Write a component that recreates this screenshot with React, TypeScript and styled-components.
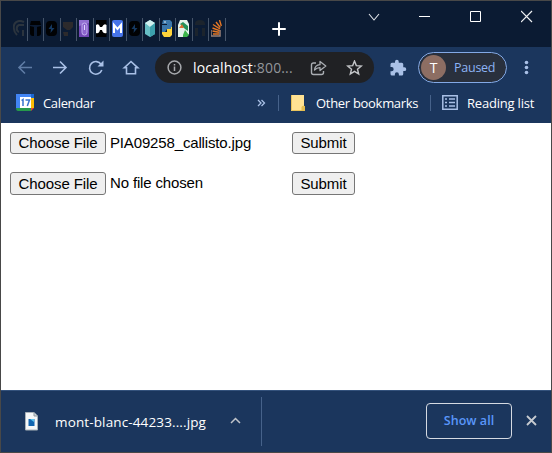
import React from "react";
import styled, { createGlobalStyle } from "styled-components";

const GlobalStyle = createGlobalStyle`
  * { box-sizing: border-box; }
  body { margin: 0; background: #fff; overflow: hidden; }
  svg { display: block; flex: none; }
`;

const Window = styled.div`
  width: 552px;
  height: 453px;
  display: flex;
  flex-direction: column;
  border: 1px solid #484848;
  background: #1b365d;
  font-family: "Open Sans", "Noto Sans", sans-serif;
  color: #fff;
`;

const TitleBar = styled.header`
  display: flex;
  height: 46px;
  flex: none;
  background: #0b1b33;
`;

const Tabs = styled.div`
  display: flex;
  padding: 17px 0 0 10px;
  width: 271px;
`;

const Tab = styled.div`
  width: 16.5px;
  height: 23px;
  border-right: 1px solid #46556a;
  padding: 2px 0 0 2px;
`;

const NewTab = styled.div`
  width: 14px;
  padding-top: 21px;
`;

const Controls = styled.div`
  display: flex;
  gap: 39px;
  padding: 9px 0 0 82px;
`;

const Toolbar = styled.div`
  display: flex;
  align-items: center;
  height: 41px;
  flex: none;
  padding-left: 15px;
`;

const NavButtons = styled.nav`
  display: flex;
  gap: 17.4px;
  width: 139px;
`;

const AddressBar = styled.div`
  display: flex;
  align-items: center;
  width: 219px;
  height: 31px;
  border-radius: 16px;
  background: #202124;
  padding-left: 12px;
`;

const Label = styled.span<{ $size?: number; $spacing?: number; $width?: number; $color?: string }>`
  flex: none;
  width: ${(p) => (p.$width ? `${p.$width}px` : "auto")};
  font-size: ${(p) => p.$size ?? 13}px;
  letter-spacing: ${(p) => p.$spacing ?? 0}px;
  color: ${(p) => p.$color ?? "#fff"};
  line-height: 20px;
  white-space: nowrap;
`;

const Address = styled(Label)`
  padding-left: 11px;
`;

const Port = styled.span`
  color: #93969b;
`;

const StarSlot = styled.span`
  margin-left: 19px;
`;

const PuzzleSlot = styled.span`
  margin-left: 15px;
`;

const Profile = styled.div`
  display: flex;
  align-items: center;
  width: 89px;
  height: 31px;
  margin: 0 11px;
  border: 1px solid #83a9e6;
  border-radius: 16px;
  background: #29303d;
  padding-left: 2px;
`;

const Avatar = styled.span`
  display: grid;
  place-items: center;
  width: 25px;
  height: 25px;
  margin-right: 8px;
  border-radius: 50%;
  background: #8d6e63;
  font-size: 14px;
  line-height: 24px;
`;

const Bookmarks = styled.div`
  display: flex;
  align-items: center;
  height: 35px;
  flex: none;
  padding: 0 0 6px 15px;
`;

const Bookmark = styled.div<{ $width: number; $gap: number }>`
  display: flex;
  align-items: center;
  width: ${(p) => p.$width}px;
  gap: ${(p) => p.$gap}px;
`;

const Divider = styled.span<{ $height: number; $after: number }>`
  flex: none;
  width: 1px;
  height: ${(p) => p.$height}px;
  margin-right: ${(p) => p.$after}px;
  background: #46628a;
`;

const Page = styled.main`
  flex: 1;
  display: flex;
  flex-direction: column;
  gap: 18px;
  padding: 9px;
  background: #fff;
  color: #000;
  font-family: "Liberation Sans", Arial, sans-serif;
  font-size: 15px;
`;

const UploadRow = styled.form<{ $height: number }>`
  display: flex;
  align-items: stretch;
  height: ${(p) => p.$height}px;
`;

const FileName = styled.span`
  width: 186px;
  padding-left: 4px;
  line-height: 22px;
  letter-spacing: -0.15px;
`;

const PlainButton = styled.button<{ $width: number }>`
  width: ${(p) => p.$width}px;
  padding: 0;
  border: 1px solid #767676;
  border-radius: 3px;
  background: #efefef;
  color: #000;
  font: 15px/20px "Liberation Sans", Arial, sans-serif;
  letter-spacing: -0.1px;
  white-space: nowrap;
`;

const Downloads = styled.footer`
  display: flex;
  align-items: center;
  height: 62px;
  flex: none;
  border-top: 1px solid #34527c;
  padding-left: 23px;
`;

const DownloadItem = styled.div`
  display: flex;
  align-items: center;
  width: 237px;
`;

const ShowAll = styled.button`
  width: 86px;
  height: 36px;
  margin: 0 14px 2px 164px;
  padding: 0;
  border: 1px solid #d5dae2;
  border-radius: 4px;
  background: transparent;
  color: #5a96fa;
  font: 600 12.5px "Open Sans", "Noto Sans", sans-serif;
  letter-spacing: 0.05px;
`;

const CloseSlot = styled.span`
  margin-bottom: 3px;
`;

const Bolt = () => (
  <svg width="12" height="17" viewBox="0 0 12 17">
    <rect y="1" width="11" height="15" rx="4" fill="#010204" />
    <path d="M6 4 2.5 9H5l-.5 4L8.5 8H6z" fill="#153860" />
  </svg>
);

const tabIcons = [
  <svg width="12" height="17" viewBox="0 0 12 17" key="a"><path d="M11 2C5-1-.5 3 1 9c0 3 2 5 3 6M6 12c-3-1-3-6 0-7h5M10 10v6" fill="none" stroke="#2b343e" strokeWidth="2" /></svg>,
  <svg width="12" height="17" viewBox="0 0 12 17" key="b"><path d="M1 1h9l1 4H0z" fill="#010204" /><path d="M0 6l4 1v9H3q-3 0-3-3zM11 6 7 7v9h1q3 0 3-3z" fill="#010204" /></svg>,
  <Bolt key="c" />,
  <svg width="12" height="17" viewBox="0 0 12 17" key="d"><path d="M0 2h10v5L7 10H4l-4-3zM0 12h5v4H1z" fill="#2c2a2c" /></svg>,
  <svg width="12" height="17" viewBox="0 0 12 17" key="e"><rect width="10" height="17" fill="#7147b5" /><path d="M0 0h10v3L0 6z" fill="#9270d2" /><rect x="3" y="3" width="5" height="12" rx="2.5" fill="#8c65ce" stroke="#c2aff0" /><path d="M5.5 5v5" stroke="#dfd4ff" /></svg>,
  <svg width="12" height="17" viewBox="0 0 12 17" key="f"><rect width="10.5" height="17" fill="#000" /><path d="M0 5q3-2 4 2h2q2-4 4.500-2v8Q7 14 6 10H4q-1 4-4 3z" fill="#fff" /></svg>,
  <svg width="12" height="17" viewBox="0 0 12 17" key="g"><rect width="11" height="17" rx="2" fill="#4774ea" /><path d="M2 13V5l3.5 4L9 5v8" fill="none" stroke="#fff" strokeWidth="2" /></svg>,
  <Bolt key="h" />,
  <svg width="12" height="17" viewBox="0 0 12 17" key="i"><path d="m0 3 5-3 5 3v11l-5 3-5-3z" fill="#67bec5" /><path d="m0 3 5-3 5 3-5 4z" fill="#d0f0ef" /><path d="m5 7 5-4v11l-5 3z" fill="#3ca0ac" /></svg>,
  <svg width="12" height="17" viewBox="0 0 12 17" key="j"><path d="M1 0h7l2 2v7H5l-2 3H0V5h5V4H0z" fill="#3c78ab" /><path d="M10 7v8l-2 2H2l-2-3v-2h5V9h4V7z" fill="#ffd43b" /><path d="M2 2h2" stroke="#dce8ef" /></svg>,
  <svg width="12" height="17" viewBox="0 0 12 17" key="k"><path d="M2 0h7l2 4v10l-3 3H0V5z" fill="#e3f2eb" /><path d="m2 4 3-2 5 4v5L7 9z" fill="#25915a" /><path d="m5 15 2-5 4 5-2 2H5z" fill="#3bb54b" /><path d="m1 8 3-4 2 4z" fill="#db6d32" /></svg>,
  <svg width="12" height="17" viewBox="0 0 12 17" key="l"><path d="M0 4q0-4 5-4t5 4v1H0zM0 8h3v8H0zM7 8h3v8H7z" fill="#1c242d" /></svg>,
  <svg width="12" height="17" viewBox="0 0 12 17" key="m"><path d="M0 10v6h9v-6" fill="none" stroke="#9b8178" strokeWidth="1.5" /><path d="M2 14h6M1.5 11l6.5 1.3M1.5 8l7 2.6M2 4.5 9 9M5 2l4.3 5.5M8.5 0l1.8 6" stroke="#e87824" strokeWidth="1.4" /></svg>,
];

const stroke = { fill: "none", stroke: "#a9c0e6", strokeWidth: 1.6 };

const uploads = [
  { name: "PIA09258_callisto.jpg", height: 22 },
  { name: "No file chosen", height: 23 },
];

export default function App() {
  return (
    <>
      <GlobalStyle />
      <Window>
        <TitleBar>
          <Tabs>{tabIcons.map((icon, i) => <Tab key={i}>{icon}</Tab>)}</Tabs>
          <NewTab>
            <svg width="14" height="14" viewBox="0 0 14 14"><path d="M7 1v12M1 7h12" stroke="#fff" strokeWidth="2" strokeLinecap="round" /></svg>
          </NewTab>
          <Controls>
            <svg width="12" height="13" viewBox="0 0 12 13"><path d="m1 4 5 6 5-6" fill="none" stroke="#e4e7ec" strokeWidth="1.1" /></svg>
            <svg width="12" height="13" viewBox="0 0 12 13"><path d="M0 6.5h11" stroke="#fff" /></svg>
            <svg width="12" height="13" viewBox="0 0 12 13"><path d="M.5 1.5h10v10H.5z" fill="none" stroke="#fff" /></svg>
            <svg width="12" height="13" viewBox="0 0 12 13"><path d="m0 1 11 11M11 1 0 12" stroke="#eef0f3" strokeWidth="1.2" /></svg>
          </Controls>
        </TitleBar>

        <Toolbar>
          <NavButtons>
            <svg width="18" height="18" viewBox="0 0 18 18"><path d="M16 8.500H3M9 2.500 3 8.500 9 14.500" {...stroke} stroke="#5f7ca5" /></svg>
            <svg width="18" height="18" viewBox="0 0 18 18"><path d="M2 8.500h13M9 2.500 15 8.500 9 14.500" {...stroke} /></svg>
            <svg width="18" height="18" viewBox="0 0 18 18"><path d="M14.200 5.500A6.300 6.300 0 1 0 14.800 11" {...stroke} /><path d="M16.500 1.500v6h-6z" fill="#a9c0e6" /></svg>
            <svg width="18" height="18" viewBox="0 0 18 18"><path d="M2.200 8.800 9 2.500l6.800 6.300h-2.300v6h-9v-6z" {...stroke} /></svg>
          </NavButtons>
          <AddressBar>
            <svg width="15" height="15" viewBox="0 0 15 15"><circle cx="7.5" cy="7.5" r="6.4" fill="none" stroke="#a6a8ac" strokeWidth="1.5" /><path d="M7.5 6.5V11M7.5 4v1.5" stroke="#a6a8ac" strokeWidth="1.5" /></svg>
            <Address $size={14} $spacing={0.15} $width={128}>localhost<Port>:800...</Port></Address>
            <svg width="17" height="16" viewBox="0 0 17 16"><path d="M6 3H3.5Q1.5 3 1.5 5v7.5q0 2 2 2h8q2 0 2-2V11" fill="none" stroke="#aaaeb3" strokeWidth="1.4" /><path d="M4.5 10Q5 5 10 4.7V1.5L15.8 6 10 10.5V7.6Q7 7.5 4.5 10z" fill="none" stroke="#aaaeb3" strokeWidth="1.3" strokeLinejoin="round" /></svg>
            <StarSlot>
              <svg width="17" height="16" viewBox="0 0 17 16"><path d="m8.5 1 1.8 4.600 5 .4-3.800 3.200 1.200 4.800-4.200-2.600-4.200 2.600 1.200-4.800-3.800-3.200 5-.4z" fill="none" stroke="#c4c6c9" strokeWidth="1.4" /></svg>
            </StarSlot>
          </AddressBar>
          <PuzzleSlot>
            <svg width="18" height="18" viewBox="0 0 24 24"><path fill="#a9c0e6" d="M20.5 11H19V7a2 2 0 0 0-2-2h-4V3.500a2.500 2.500 0 0 0-5 0V5H4a2 2 0 0 0-2 2v3.800h1.500a2.700 2.700 0 0 1 0 5.400H2V20a2 2 0 0 0 2 2h3.800v-1.500a2.700 2.700 0 0 1 5.400 0V22H17a2 2 0 0 0 2-2v-4h1.500a2.500 2.500 0 0 0 0-5z" /></svg>
          </PuzzleSlot>
          <Profile>
            <Avatar>T</Avatar>
            <Label $size={12.5} $spacing={-0.25} $color="#8db4f5">Paused</Label>
          </Profile>
          <svg width="18" height="18" viewBox="0 0 18 18"><g fill="#a9c0e6"><circle cx="8.500" cy="3.500" r="1.800" /><circle cx="8.500" cy="8.500" r="1.800" /><circle cx="8.500" cy="13.500" r="1.800" /></g></svg>
        </Toolbar>

        <Bookmarks>
          <Bookmark $width={241} $gap={9}>
            <svg width="18" height="17" viewBox="0 0 18 17"><path d="M0 0h15v4H4v10H0z" fill="#4285f4" /><path d="M15 0h3v4h-3z" fill="#1967d2" /><path d="M15 4h3v10h-3z" fill="#fbbc04" /><path d="M0 14h15v3H2q-2 0-2-3z" fill="#26994b" /><path d="M15 14h3l-3 3z" fill="#ea4335" /><path d="M4 3h11v11H4z" fill="#fff" /><path d="m5.500 6.500 1.500-1v6.500M9.500 6h4l-2.200 6" stroke="#3974ce" strokeWidth="1.500" fill="none" /></svg>
            <Label $spacing={-0.35}>Calendar</Label>
          </Bookmark>
          <Bookmark $width={21} $gap={0}>
            <svg width="9" height="8" viewBox="0 0 9 8"><path d="m1 1 3 3-3 3m3.500-6 3 3-3 3" {...stroke} strokeWidth="1.300" /></svg>
          </Bookmark>
          <Divider $height={16} $after={12} />
          <Bookmark $width={139} $gap={11}>
            <svg width="14" height="16" viewBox="0 0 14 16"><path d="M0 0h13v16H0z" fill="#ffe293" /><path d="M.5 0v15.500H13" fill="none" stroke="#e9c35c" /><path d="M10.500 12q1-2 3.500-1v5h-3.500z" fill="#e4bd4f" /></svg>
            <Label $spacing={-0.3}>Other bookmarks</Label>
          </Bookmark>
          <Divider $height={16} $after={11} />
          <Bookmark $width={100} $gap={9}>
            <svg width="16" height="15" viewBox="0 0 16 15"><path d="M.8.8h14.400v13.400H.8z" {...stroke} strokeWidth="1.500" /><path d="M3 4h2m2 0h6M3 7.500h2m2 0h6M3 11h2m2 0h6" {...stroke} strokeWidth="1.500" /></svg>
            <Label $spacing={-0.2}>Reading list</Label>
          </Bookmark>
        </Bookmarks>

        <Page>
          {uploads.map(({ name, height }) => (
            <UploadRow key={name} $height={height}>
              <PlainButton type="button" $width={96}>Choose File</PlainButton>
              <FileName>{name}</FileName>
              <PlainButton type="button" $width={63}>Submit</PlainButton>
            </UploadRow>
          ))}
        </Page>

        <Downloads>
          <DownloadItem>
            <svg width="31" height="20" viewBox="0 0 31 20"><path d="M1.500.5H10L13.500 4v14h-12z" fill="#f5f7f8" stroke="#a8b1b8" /><path d="M10 .5V4h3.500" fill="#cfd6da" stroke="#8e989f" /><path d="M4.500 7h6v7h-6z" fill="#1265b0" /><path d="M6 7h4v3z" fill="#58c6f1" /></svg>
            <Label $size={13.5} $spacing={0.13} $width={175}>mont-blanc-44233....jpg</Label>
            <svg width="11" height="9" viewBox="0 0 11 9"><path d="m1 6 4.500-4.500L10 6" fill="none" stroke="#c0c4ca" strokeWidth="1.500" /></svg>
          </DownloadItem>
          <Divider $height={49} $after={0} />
          <ShowAll>Show all</ShowAll>
          <CloseSlot>
            <svg width="11" height="11" viewBox="0 0 11 11"><path d="m1 1 9 9m0-9-9 9" stroke="#c7cbd1" strokeWidth="1.800" /></svg>
          </CloseSlot>
        </Downloads>
      </Window>
    </>
  );
}
